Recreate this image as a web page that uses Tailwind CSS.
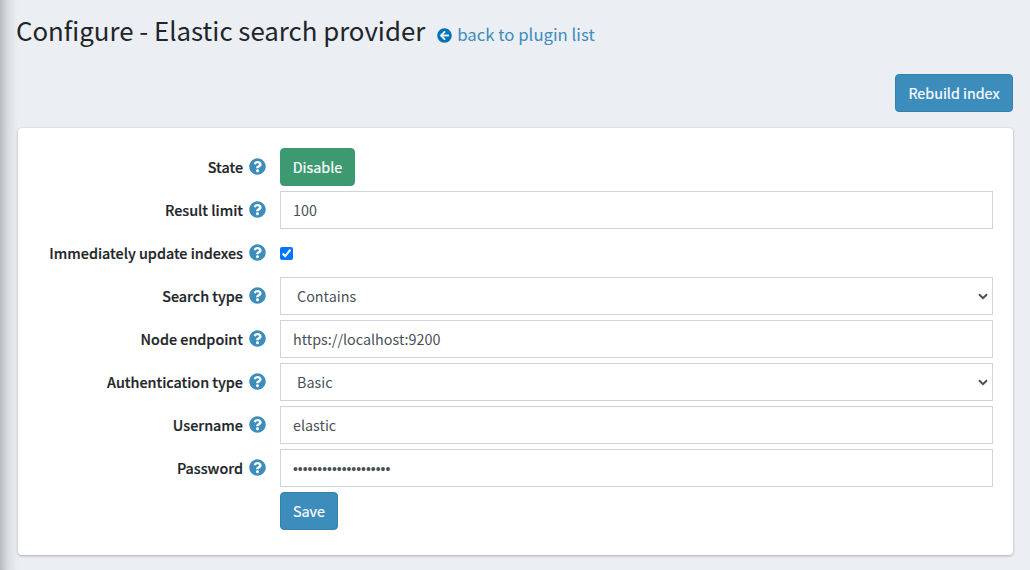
<!DOCTYPE html>
<html lang="en">
<head>
<meta charset="utf-8">
<title>Configure - Elastic search provider</title>
<script src="https://cdn.jsdelivr.net/npm/@tailwindcss/browser@4"></script>
</head>
<body class="relative h-[570px] w-[1030px] overflow-hidden bg-[#ebeef3] font-['Noto_Sans_CJK_SC',sans-serif] text-[14.350px] leading-6 text-[#212529]">
<svg class="hidden"><symbol id="help" viewBox="0 0 512 512"><path fill="currentColor" d="M504 256c0 136.997-111.043 248-248 248S8 392.997 8 256C8 119.083 119.043 8 256 8s248 111.083 248 248zM262.655 90c-54.497 0-89.255 22.957-116.549 63.758-3.536 5.286-2.353 12.415 2.715 16.258l34.699 26.31c5.205 3.947 12.621 3.008 16.665-2.122 17.864-22.658 30.113-35.797 57.303-35.797 20.429 0 45.698 13.148 45.698 32.958 0 14.976-12.363 22.667-32.534 33.976C247.128 238.528 216 254.941 216 296v4c0 6.627 5.373 12 12 12h56c6.627 0 12-5.373 12-12v-1.333c0-28.462 83.186-29.647 83.186-106.667 0-58.002-60.165-102-116.531-102zM256 338c-25.365 0-46 20.635-46 46 0 25.364 20.635 46 46 46s46-20.636 46-46c0-25.365-20.635-46-46-46z"/></symbol>
<symbol id="chevron" viewBox="0 0 10 7"><path fill="none" stroke="currentColor" stroke-width="2" d="M1 1.200L5 5.200L9 1.200"/></symbol></svg>
<div class="absolute inset-y-0 left-0 w-[18px] bg-linear-to-r from-black/22 via-black/7 via-45% to-transparent"></div>
<header class="flex items-start pt-[10px] pl-4">
<h1 class="text-[25.800px] leading-10">Configure - Elastic search provider</h1>
<a class="mt-3 ml-3 flex items-center gap-[5px] text-[16.750px] text-[#3c8dbc]"><svg class="mt-[3px] size-[15px] text-[#0073b7]" viewBox="0 0 512 512"><path fill="currentColor" d="M256 504C119 504 8 393 8 256S119 8 256 8s248 111 248 248-111 248-248 248zm28.900-143.600L209.400 288H392c13.300 0 24-10.700 24-24v-16c0-13.300-10.700-24-24-24H209.400l75.500-72.400c9.700-9.300 9.900-24.800.4-34.300l-11-10.900c-9.400-9.400-24.600-9.400-33.900 0L107.700 239c-9.400 9.400-9.400 24.600 0 33.900l132.700 132.700c9.400 9.400 24.600 9.400 33.900 0l11-10.900c9.500-9.500 9.300-25-.4-34.300z"/></svg>back to plugin list</a>
</header>
<div class="mt-6 flex justify-end pr-[17px]">
<button class="h-[38px] w-[118px] rounded-[4px] border border-[#367fa9] bg-[#3c8dbc] text-white [-webkit-text-stroke:0.2px]">Rebuild index</button>
</div>
<main class="mt-4 mr-[17px] ml-[18px] h-[427px] rounded-[4px] bg-white pt-5 pr-5 shadow-[0_0_1px_rgba(0,0,0,.125),0_1px_3px_rgba(0,0,0,.25)]">
<div class="grid auto-rows-[38px] grid-cols-[248px_1fr] items-center gap-x-[14px] gap-y-[5px]">
<label class="flex items-center justify-end gap-[6px] font-medium [-webkit-text-stroke:0.2px]">State<svg class="mb-px size-[17px] text-[#3c8dbc]"><use href="#help"/></svg></label>
<button class="h-[38px] w-[75px] rounded-[4px] border border-[#3b9a74] bg-[#3d9970] text-white [-webkit-text-stroke:0.2px]">Disable</button>
<label class="flex items-center justify-end gap-[6px] font-medium [-webkit-text-stroke:0.2px]">Result limit<svg class="mb-px size-[17px] text-[#3c8dbc]"><use href="#help"/></svg></label>
<div class="flex h-[38px] items-center border border-[#ced4da] px-3 text-[#495057]">100</div>
<label class="flex items-center justify-end gap-[6px] font-medium [-webkit-text-stroke:0.2px]">Immediately update indexes<svg class="mb-px size-[17px] text-[#3c8dbc]"><use href="#help"/></svg></label>
<div><input type="checkbox" checked class="block size-[13px] accent-[#0075ff]"></div>
<label class="flex items-center justify-end gap-[6px] font-medium [-webkit-text-stroke:0.2px]">Search type<svg class="mb-px size-[17px] text-[#3c8dbc]"><use href="#help"/></svg></label>
<div class="flex h-[38px] items-center justify-between border border-[#ced4da] pr-[4px] pl-4 text-[#495057]">Contains<svg class="h-[7px] w-[10px]"><use href="#chevron"/></svg></div>
<label class="flex items-center justify-end gap-[6px] font-medium [-webkit-text-stroke:0.2px]">Node endpoint<svg class="mb-px size-[17px] text-[#3c8dbc]"><use href="#help"/></svg></label>
<div class="flex h-[38px] items-center border border-[#ced4da] px-3 text-[#495057]">https://localhost:9200</div>
<label class="flex items-center justify-end gap-[6px] font-medium [-webkit-text-stroke:0.2px]">Authentication type<svg class="mb-px size-[17px] text-[#3c8dbc]"><use href="#help"/></svg></label>
<div class="flex h-[38px] items-center justify-between border border-[#ced4da] pr-[4px] pl-4 text-[#495057]">Basic<svg class="h-[7px] w-[10px]"><use href="#chevron"/></svg></div>
<label class="flex items-center justify-end gap-[6px] font-medium [-webkit-text-stroke:0.2px]">Username<svg class="mb-px size-[17px] text-[#3c8dbc]"><use href="#help"/></svg></label>
<div class="flex h-[38px] items-center border border-[#ced4da] px-3 text-[#495057]">elastic</div>
<label class="flex items-center justify-end gap-[6px] font-medium [-webkit-text-stroke:0.2px]">Password<svg class="mb-px size-[17px] text-[#3c8dbc]"><use href="#help"/></svg></label>
<div class="flex h-[38px] items-center border border-[#ced4da] px-3 pt-[2px] text-[#495057]"><span class="font-['Liberation_Sans'] text-[13.900px]">••••••••••••••••••••</span></div>
<button class="col-start-2 h-[38px] w-[58px] rounded-[4px] border border-[#367fa9] bg-[#3c8dbc] text-white [-webkit-text-stroke:0.2px]">Save</button>
</div>
</main>
</body>
</html>
